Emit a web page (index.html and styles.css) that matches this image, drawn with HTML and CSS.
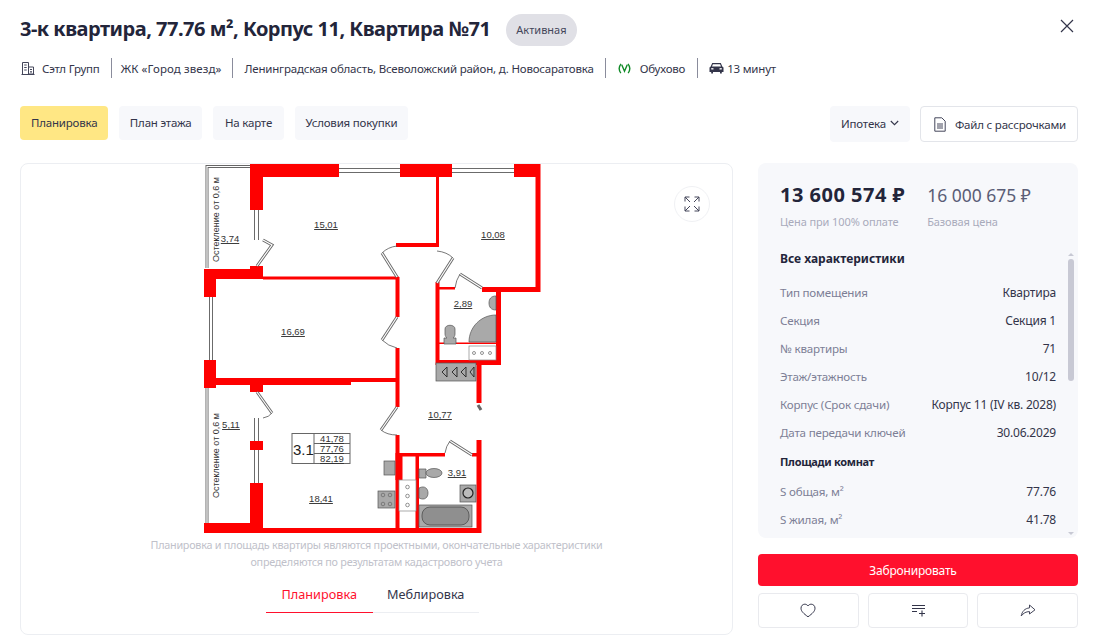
FILE: index.html
```html
<!DOCTYPE html>
<html lang="ru">

<head>
    <meta charset="UTF-8">
    <meta name="viewport" content="width=device-width, initial-scale=1.0">
    <title>3-к квартира, 77.76 м², Корпус 11, Квартира №71</title>
    <link rel="stylesheet" href="styles.css">
</head>

<body>
    <div class="page">
        <div class="title-row">
            <h1>3-к квартира, 77.76 м², Корпус 11, Квартира №71</h1>
            <span class="badge">Активная</span>
            <button class="close" aria-label="Закрыть">
                <svg width="14" height="14" viewBox="0 0 14 14"><path d="M1 1l12 12M13 1L1 13" stroke="#33354a" stroke-width="1.2" fill="none"/></svg>
            </button>
        </div>

        <div class="meta">
            <div class="meta-item meta-first">
                <svg width="14" height="14" viewBox="0 0 14 14" fill="none" stroke="#44465a" stroke-width="1"><path d="M1.5 13V1.5h6V13M7.5 6h5v7h-5M0.5 13.5h13"/><path d="M3.2 4h2.500M3.2 6.500h2.500M3.2 9h2.500M9 8.500h2M9 10.800h2" stroke-width="1.200"/></svg>
                <span>Сэтл Групп</span>
            </div>
            <div class="meta-item meta-wide">ЖК «Город звезд»</div>
            <div class="meta-item">Ленинградская область, Всеволожский район, д. Новосаратовка</div>
            <div class="meta-item meta-metro">
                <svg class="metro" width="13" height="11" viewBox="0 0 14 12" fill="none" stroke="#0f8a26" stroke-width="1.500"><path d="M3 11C.8 8 .8 4 3.200 1"/><path d="M11 11c2.200-3 2.200-7-.2-10"/><path d="M4 2l3 7 3-7"/></svg>
                <span>Обухово</span>
            </div>
            <div class="meta-item meta-car">
                <svg width="15" height="12" viewBox="0 0 15 12"><path fill="#33354a" d="M3.200 1h8.600l1.500 3.500 1.200 1V10h-1.700v1.500h-1.800V10H4V11.500H2.200V10H.5V5.500l1.200-1zM3.900 2.200L3 4.500h9l-.9-2.300zM2.300 6v1.600h2.200V6.200zm10.400 0l-2.200.2v1.400h2.200z"/></svg>
                <span>13 минут</span>
            </div>
        </div>

        <div class="toolbar">
            <div class="tabs">
                <div class="tab active">Планировка</div>
                <div class="tab">План этажа</div>
                <div class="tab tab-map">На карте</div>
                <div class="tab">Условия покупки</div>
            </div>
            <div class="tools">
                <div class="tool-select">Ипотека
                    <svg width="9" height="6" viewBox="0 0 9 6"><path d="M.8 1l3.700 3.700L8.200 1" stroke="#33354a" stroke-width="1.100" fill="none"/></svg>
                </div>
                <div class="tool-file">
                    <svg width="12" height="15" viewBox="0 0 12 15" fill="none" stroke="#44465a" stroke-width="1"><path d="M.8.800h7l3.400 3.400v10H.8zM3 7h6M3 9h6M3 11h6"/></svg>
                    Файл с рассрочками
                </div>
            </div>
        </div>

        <div class="main">
            <div class="plan-card">
                <button class="expand" aria-label="Развернуть">
                    <svg width="16" height="16" viewBox="0 0 16 16" fill="none" stroke="#44465a" stroke-width="1"><path d="M5.500 1H1v4.500M1 1l5 5M10.500 1H15v4.500M15 1l-5 5M5.500 15H1v-4.500M1 15l5-5M10.500 15H15v-4.500M15 15l-5-5"/></svg>
                </button>

                <svg class="floorplan" width="361" height="372" viewBox="196 164 361 372">
                    <!-- балконы -->
                    <g class="glass">
                        <path d="M250 166.500H207V268"/>
                        <path d="M207 388V530"/>
                    </g>
                    <g class="glass-in">
                        <path d="M250 166.500H207V268"/>
                        <path d="M207 388V530"/>
                    </g>

                    <!-- окна -->
                    <g class="win">
                        <rect x="339" y="165" width="61" height="11"/>
                        <rect x="452" y="165" width="62" height="11"/>
                        <rect x="251" y="210" width="11" height="30"/>
                        <rect x="206" y="297" width="10" height="63"/>
                        <rect x="251" y="418" width="11" height="65"/>
                        <path d="M339 168.500h61M339 172.500h61M452 168.500h62M452 172.500h62M254.500 210v30M258.500 210v30M209.500 297v63M212.500 297v63M254.500 418v65M258.500 418v65"/>
                    </g>

                    <!-- стены -->
                    <g class="wall">
                        <rect x="250" y="164" width="89" height="13"/>
                        <rect x="400" y="164" width="52" height="13"/>
                        <rect x="514" y="164" width="26" height="13"/>
                        <rect x="535.500" y="164" width="5" height="128"/>
                        <rect x="250" y="164" width="13" height="46"/>
                        <rect x="250" y="266" width="13" height="13"/>
                        <rect x="204" y="269" width="59" height="10"/>
                        <rect x="204" y="269" width="12" height="28"/>
                        <rect x="263" y="276.500" width="136" height="3"/>
                        <rect x="436" y="177" width="3" height="70"/>
                        <rect x="396" y="243" width="43" height="4"/>
                        <rect x="482" y="287" width="58" height="5"/>
                        <rect x="435.500" y="282" width="4" height="83"/>
                        <rect x="436" y="287" width="19" height="2.500"/>
                        <rect x="496" y="290" width="5" height="75"/>
                        <rect x="436" y="360" width="65" height="5"/>
                        <rect x="439" y="342.500" width="57" height="1.500"/>
                        <rect x="395.500" y="277" width="4" height="40"/>
                        <rect x="395.500" y="348" width="4" height="59"/>
                        <rect x="204" y="360" width="12" height="28"/>
                        <rect x="216" y="378" width="180" height="4"/>
                        <rect x="216" y="378" width="135" height="7"/>
                        <rect x="250" y="380" width="13" height="12"/>
                        <rect x="476.500" y="365" width="5" height="38"/>
                        <rect x="395.500" y="435" width="4" height="95"/>
                        <rect x="398" y="453" width="47" height="3.500"/>
                        <rect x="472" y="453" width="8" height="3.500"/>
                        <rect x="476.500" y="440" width="5" height="93"/>
                        <rect x="395.500" y="453" width="7" height="27"/>
                        <rect x="415.500" y="455" width="3.500" height="73"/>
                        <rect x="250" y="441" width="13" height="9"/>
                        <rect x="250" y="483" width="13" height="45"/>
                        <rect x="204" y="523" width="59" height="10"/>
                        <rect x="204" y="528" width="277" height="5"/>
                    </g>

                    <!-- двери -->
                    <g class="door">
                        <path d="M263 240l9 5-15 21"/>
                        <path d="M397 277l-15-24"/>
                        <path d="M397 317l-15 23"/>
                        <path d="M437 283l16-25"/>
                        <path d="M482 288l-22-14"/>
                        <path d="M257 392l15 21"/>
                        <path d="M397 407l-16 23"/>
                        <path d="M472 455l-22-14"/>
                        <path d="M478 405l3 5"/>
                    </g>
                    <g class="door-in">
                        <path d="M263 240l9 5-15 21"/>
                        <path d="M397 277l-15-24"/>
                        <path d="M397 317l-15 23"/>
                        <path d="M437 283l16-25"/>
                        <path d="M482 288l-22-14"/>
                        <path d="M257 392l15 21"/>
                        <path d="M397 407l-16 23"/>
                        <path d="M472 455l-22-14"/>
                    </g>
                    <g class="arc">
                        <path d="M382 253q6-6 15-7"/>
                        <path d="M382 340q6 6 15 8"/>
                        <path d="M453 258q-6-6-16-7"/>
                        <path d="M460 274q-4 6-5 14"/>
                        <path d="M272 413q-3 4-9 5"/>
                        <path d="M381 430q6 5 16 5"/>
                        <path d="M450 441q-4 5-5 12"/>
                    </g>

                    <!-- сантехника -->
                    <g class="fix">
                        <path d="M496 315v27h-27c0-15 12-27 27-27z"/>
                        <path d="M496 296c-5 0-7 3-7 7s2 7 7 7z"/>
                        <path d="M445 329c0-5 10-5 10 0v5c0 2-1 3-2 4h3v6h-12v-6h3c-1-1-2-2-2-4z"/>
                        <rect x="436" y="363" width="40" height="18"/>
                        <rect x="384" y="461" width="11" height="14"/>
                        <rect x="378" y="491" width="17" height="17"/>
                        <rect x="460" y="485" width="16" height="17"/>
                        <rect x="419" y="505" width="53" height="22"/>
                        <path d="M419 469h7v9h-7z"/>
                        <ellipse cx="434" cy="473" rx="8" ry="4.500"/>
                        <path d="M419 488c6-3 9 1 9 5s-3 8-9 5z"/>
                    </g>
                    <rect class="tub" x="422" y="507" width="47" height="18" rx="8"/>
                    <circle class="ring" cx="468" cy="493" r="5"/>
                    <path class="ticks" d="M442 372l5-5v10zM452 372l5-5v10zM461 372l5-5v10zM470 372l4-5v10z"/>
                    <rect class="counter" x="399" y="480" width="17" height="31"/>
                    <rect class="counter" x="469" y="346" width="27" height="14"/>
                    <g class="dots">
                        <circle cx="407.500" cy="487" r="1.800"/>
                        <circle cx="407.500" cy="496" r="1.800"/>
                        <circle cx="407.500" cy="505" r="1.800"/>
                        <circle cx="474" cy="353" r="1.500"/>
                        <circle cx="482" cy="353" r="1.500"/>
                        <circle cx="490" cy="353" r="1.500"/>
                        <circle cx="383" cy="495" r="1.800"/>
                        <circle cx="390" cy="495" r="1.800"/>
                        <circle cx="383" cy="504" r="1.800"/>
                        <circle cx="390" cy="504" r="1.800"/>
                    </g>

                    <!-- штамп -->
                    <g class="stamp">
                        <rect x="292" y="433.500" width="58" height="30"/>
                        <path d="M314 433.500v30M314 443.500h36M314 453.500h36"/>
                    </g>
                    <text class="stamp-big" x="293" y="455">3.1</text>
                    <g class="stamp-num">
                        <text x="332" y="442">41,78</text>
                        <text x="332" y="452">77,76</text>
                        <text x="332" y="462">82,19</text>
                    </g>

                    <g class="room">
                        <text x="326" y="228">15,01</text>
                        <text x="493" y="238">10,08</text>
                        <text x="230" y="242">3,74</text>
                        <text x="463" y="307">2,89</text>
                        <text x="293" y="335">16,69</text>
                        <text x="440" y="418">10,77</text>
                        <text x="231" y="428">5,11</text>
                        <text x="321" y="502">18,41</text>
                        <text x="457" y="476">3,91</text>
                    </g>
                    <text class="note" transform="translate(219 262) rotate(-90)">Остекление от 0,6 м</text>
                    <text class="note" transform="translate(219 498) rotate(-90)">Остекление от 0,6 м</text>
                </svg>

                <p class="disclaimer">Планировка и площадь квартиры являются проектными, окончательные характеристики<br>определяются по результатам кадастрового учета</p>

                <div class="plan-tabs">
                    <div class="plan-tab active">Планировка</div>
                    <div class="plan-tab">Меблировка</div>
                </div>
            </div>

            <div class="side">
                <div class="info">
                    <div class="prices">
                        <div class="price-block">
                            <div class="price">13 600 574 ₽</div>
                            <div class="price-label">Цена при 100% оплате</div>
                        </div>
                        <div class="price-block">
                            <div class="price price-base">16 000 675 ₽</div>
                            <div class="price-label">Базовая цена</div>
                        </div>
                    </div>

                    <div class="specs">
                        <h3>Все характеристики</h3>
                        <div class="row"><span>Тип помещения</span><b>Квартира</b></div>
                        <div class="row"><span>Секция</span><b>Секция 1</b></div>
                        <div class="row"><span>№ квартиры</span><b>71</b></div>
                        <div class="row"><span>Этаж/этажность</span><b>10/12</b></div>
                        <div class="row"><span>Корпус (Срок сдачи)</span><b>Корпус 11 (IV кв. 2028)</b></div>
                        <div class="row"><span>Дата передачи ключей</span><b>30.06.2029</b></div>
                        <h4>Площади комнат</h4>
                        <div class="row"><span>S общая, м²</span><b>77.76</b></div>
                        <div class="row"><span>S жилая, м²</span><b>41.78</b></div>
                    </div>

                    <div class="scroll">
                        <i class="arrow-up"></i>
                        <i class="thumb"></i>
                        <i class="arrow-down"></i>
                    </div>
                </div>

                <button class="book">Забронировать</button>

                <div class="actions">
                    <button aria-label="В избранное">
                        <svg width="16" height="15" viewBox="0 0 16 15" fill="none" stroke="#33354a" stroke-width="1"><path d="M8 13.800C3.500 10.500 1 8.200 1 5.200 1 2.800 2.800 1.200 4.800 1.200 6.200 1.200 7.300 1.900 8 3c.7-1.100 1.800-1.800 3.200-1.800 2 0 3.800 1.600 3.800 4 0 3-2.500 5.300-7 8.600z"/></svg>
                    </button>
                    <button aria-label="Сравнить">
                        <svg width="15" height="13" viewBox="0 0 15 13" fill="none" stroke="#33354a" stroke-width="1.100"><path d="M1 1.500h13M1 4.500h13M1 7.500h5M8 9.500h6M11 6.500v6"/></svg>
                    </button>
                    <button aria-label="Поделиться">
                        <svg width="16" height="13" viewBox="0 0 16 13" fill="none" stroke="#44465a" stroke-width="1"><path d="M9.500 1L15 5.800 9.500 10V7.600C6 7.600 3.500 9 1.200 12 2 7.500 4.800 4.300 9.500 3.900z"/></svg>
                    </button>
                </div>
            </div>
        </div>
    </div>
</body>

</html>
```

FILE: styles.css
```css
html,
body {
    height: 100%;
    overflow: hidden;
}

body {
    margin: 0;
    font-family: 'Noto Sans', sans-serif;
    font-size: 13px;
    color: #33354a;
    background-color: #fff;
}

button {
    font-family: inherit;
    cursor: pointer;
}

.page {
    padding: 14px 19px 0 20px;
}

/* заголовок */
.title-row {
    display: flex;
    align-items: center;
    height: 32px;
}

h1 {
    margin: 0 0 4px 0;
    font-size: 20px;
    font-weight: 700;
    color: #23253a;
    letter-spacing: -0.5px;
    white-space: nowrap;
}

.badge {
    margin-left: 16px;
    padding: 0 10px;
    height: 32px;
    line-height: 32px;
    border-radius: 16px;
    background-color: #e0e0e6;
    font-size: 11px;
    color: #44465a;
}

.close {
    margin-left: auto;
    margin-right: 4px;
    margin-top: -8px;
    padding: 0;
    border: none;
    background: none;
    line-height: 0;
}

.meta {
    display: flex;
    align-items: center;
    margin-top: 12px;
    height: 20px;
}

.meta-item {
    display: flex;
    align-items: center;
    gap: 8px;
    height: 20px;
    padding: 0 11px;
    border-left: 1px solid #8a8c9c;
    font-size: 11.5px;
    letter-spacing: -0.2px;
    white-space: nowrap;
}

.meta-first {
    gap: 7px;
    padding: 0 11px 0 1px;
    border-left: none;
}

.meta-wide {
    padding-left: 9px;
    letter-spacing: 0.1px;
}

.meta-metro {
    gap: 9px;
    padding: 0 12px;
}

.meta-car {
    gap: 3px;
}

/* вкладки */
.toolbar {
    display: flex;
    justify-content: space-between;
    margin-top: 28px;
}

.tabs {
    display: flex;
    gap: 10.5px;
}

.tab {
    height: 34px;
    line-height: 34px;
    padding: 0 11px;
    border-radius: 4px;
    background-color: #f7f8fb;
    font-size: 11.5px;
    letter-spacing: -0.2px;
}

.tab.active {
    background-color: #ffe784;
}

.tab-map {
    padding: 0 12px;
}

.tools {
    display: flex;
    gap: 10px;
}

.tool-select {
    display: flex;
    align-items: center;
    gap: 4px;
    height: 34px;
    padding: 0 11px 2px 11px;
    border-radius: 4px;
    background-color: #f7f8fb;
    font-size: 11.5px;
    letter-spacing: -0.2px;
}

.tool-file {
    display: flex;
    align-items: center;
    gap: 9px;
    height: 34px;
    padding: 0 11px 0 13px;
    border: 1px solid #e3e5ea;
    border-radius: 4px;
    font-size: 11.5px;
    letter-spacing: -0.2px;
}

/* основная часть */
.main {
    display: flex;
    gap: 25px;
    margin-top: 21px;
}

.plan-card {
    position: relative;
    flex: 1;
    height: 470px;
    border: 1px solid #eceef2;
    border-radius: 8px;
}

.expand {
    position: absolute;
    top: 22px;
    right: 22px;
    width: 36px;
    height: 36px;
    padding: 0;
    border: 1px solid #f0f1f4;
    border-radius: 50%;
    background-color: #fff;
    line-height: 0;
}

.floorplan {
    display: block;
    margin: 0 auto;
}

.wall {
    fill: #fe0000;
}

.win rect {
    fill: #fff;
}

.win path {
    fill: none;
    stroke: #6b6b6b;
    stroke-width: 1;
}

.glass,
.door {
    fill: none;
    stroke: #666;
    stroke-width: 3;
}

.glass-in,
.door-in {
    fill: none;
    stroke: #fff;
    stroke-width: 1.2;
}

.arc {
    fill: none;
    stroke: #555;
    stroke-width: 0.8;
}

.fix {
    fill: #a9a9a9;
    stroke: #555;
    stroke-width: 0.7;
}

.tub {
    fill: #8f8f8f;
    stroke: #444;
    stroke-width: 0.7;
}

.ring {
    fill: #bbb;
    stroke: #222;
    stroke-width: 1.2;
}

.ticks {
    fill: none;
    stroke: #222;
    stroke-width: 0.9;
}

.counter {
    fill: #fff;
    stroke: #888;
    stroke-width: 0.7;
}

.dots circle {
    fill: none;
    stroke: #666;
    stroke-width: 0.7;
}

.stamp {
    fill: none;
    stroke: #666;
    stroke-width: 1;
}

.stamp-big {
    font-family: 'Liberation Sans', sans-serif;
    font-size: 15px;
    fill: #222;
}

.stamp-num text,
.room text {
    font-family: 'Liberation Sans', sans-serif;
    font-size: 9.5px;
    fill: #333;
    text-anchor: middle;
    text-decoration: underline;
}

.note {
    font-family: 'Liberation Sans', sans-serif;
    font-size: 9px;
    fill: #333;
}

.disclaimer {
    margin: 0;
    text-align: center;
    font-size: 10.8px;
    line-height: 17px;
    letter-spacing: -0.25px;
    color: #c0c1ca;
}

.plan-tabs {
    display: flex;
    width: 213px;
    margin: 14px 0 0 245px;
    border-bottom: 1px solid #eceef2;
}

.plan-tab {
    flex: 1;
    padding-bottom: 8px;
    text-align: center;
    font-size: 12.7px;
    line-height: 20px;
    margin-bottom: -1px;
    border-bottom: 1px solid transparent;
}

.plan-tab.active {
    color: #ff102d;
    border-bottom-color: #ff102d;
}

/* правая колонка */
.side {
    width: 320px;
    flex: none;
}

.info {
    position: relative;
    height: 375px;
    overflow: hidden;
    border-radius: 8px;
    background-color: #f7f8fb;
}

.prices {
    display: flex;
    gap: 22px;
    padding: 19px 22px 0;
}

.price {
    font-size: 20px;
    line-height: 26px;
    font-weight: 700;
    letter-spacing: 0.5px;
    color: #23253a;
    white-space: nowrap;
}

.price-base {
    font-weight: 400;
    letter-spacing: 0;
    color: #5a5d76;
    font-size: 17.5px;
}

.price-label {
    margin-top: 6px;
    font-size: 11px;
    color: #a9abbb;
    letter-spacing: -0.1px;
}

.specs {
    padding: 20px 22px 0 22px;
}

h3 {
    margin: 0 0 10px;
    font-size: 12px;
    line-height: 20px;
    color: #23253a;
}

h4 {
    margin: 5px 0 6px;
    font-size: 11px;
    letter-spacing: -0.3px;
    line-height: 20px;
    color: #23253a;
}

.row {
    display: flex;
    justify-content: space-between;
    height: 28px;
    line-height: 28px;
    font-size: 12px;
    letter-spacing: -0.2px;
}

.row span {
    font-size: 11.6px;
    color: #7d7f96;
}

.row b {
    font-weight: 400;
    color: #33354a;
}

.scroll {
    position: absolute;
    top: 90px;
    right: 4px;
    bottom: 3px;
    width: 6px;
}

.thumb {
    position: absolute;
    top: 6px;
    left: 0;
    width: 6px;
    height: 122px;
    border-radius: 3px;
    background-color: #c8c9d4;
}

.arrow-up,
.arrow-down {
    position: absolute;
    left: 0;
    border-left: 3px solid transparent;
    border-right: 3px solid transparent;
}

.arrow-up {
    top: 0;
    border-bottom: 3px solid #c8c9d4;
}

.arrow-down {
    bottom: 0;
    border-top: 3px solid #c8c9d4;
}

.book {
    display: block;
    width: 100%;
    height: 32px;
    margin-top: 16px;
    padding: 0 10px 0 0;
    border: none;
    border-radius: 4px;
    background-color: #ff102d;
    color: #fff;
    font-size: 12px;
    letter-spacing: -0.2px;
}

.actions {
    display: flex;
    gap: 9px;
    margin-top: 7px;
}

.actions button {
    flex: 1;
    height: 35px;
    padding: 0;
    border: 1px solid #e9eaee;
    border-radius: 4px;
    background-color: #fff;
    line-height: 0;
}
```
